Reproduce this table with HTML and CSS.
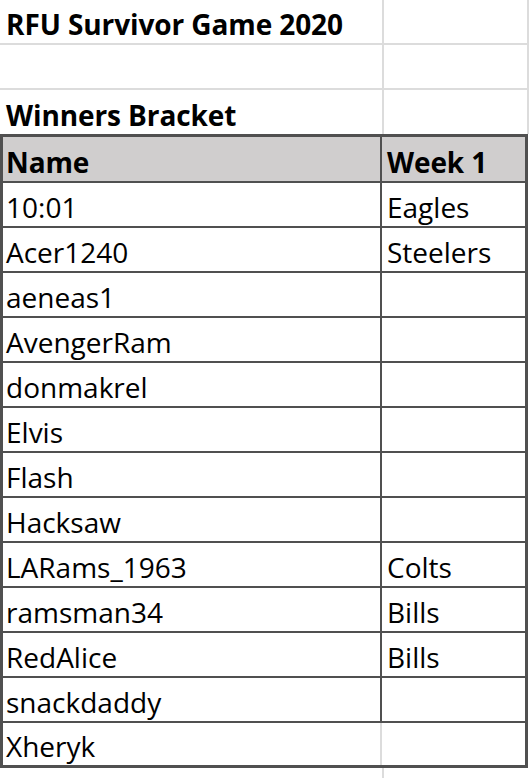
FILE: index.html
```html
<!DOCTYPE html>
<html>
<head>
<meta charset="utf-8">
<link rel="stylesheet" href="styles.css">
</head>
<body>
<div class="sheet">
  <div class="row plain"><div class="cell a bold">RFU Survivor Game 2020</div><div class="cell b"></div></div>
  <div class="row plain"><div class="cell a"></div><div class="cell b"></div></div>
  <div class="row plain"><div class="cell a bold">Winners Bracket</div><div class="cell b"></div></div>
  <div class="table">
    <div class="row head"><div class="cell a bold">Name</div><div class="cell b bold">Week 1</div></div>
    <div class="row data"><div class="cell a">10:01</div><div class="cell b">Eagles</div></div>
    <div class="row data"><div class="cell a">Acer1240</div><div class="cell b">Steelers</div></div>
    <div class="row data"><div class="cell a">aeneas1</div><div class="cell b"></div></div>
    <div class="row data"><div class="cell a">AvengerRam</div><div class="cell b"></div></div>
    <div class="row data"><div class="cell a">donmakrel</div><div class="cell b"></div></div>
    <div class="row data"><div class="cell a">Elvis</div><div class="cell b"></div></div>
    <div class="row data"><div class="cell a">Flash</div><div class="cell b"></div></div>
    <div class="row data"><div class="cell a">Hacksaw</div><div class="cell b"></div></div>
    <div class="row data"><div class="cell a">LARams_1963</div><div class="cell b">Colts</div></div>
    <div class="row data"><div class="cell a">ramsman34</div><div class="cell b">Bills</div></div>
    <div class="row data"><div class="cell a">RedAlice</div><div class="cell b">Bills</div></div>
    <div class="row data"><div class="cell a">snackdaddy</div><div class="cell b"></div></div>
    <div class="row data last"><div class="cell a">Xheryk</div><div class="cell b"></div></div>
  </div>
  <div class="row tail"><div class="cell a"></div><div class="cell b"></div></div>
</div>
</body>
</html>
```

FILE: styles.css
```css
html, body {
  margin: 0;
  padding: 0;
  background: #ffffff;
}
.sheet {
  width: 529px;
  display: flex;
  flex-direction: column;
  font-family: "Open Sans", Lato, sans-serif;
  font-size: 28px;
  color: #000000;
}
.row {
  display: flex;
}
.cell {
  box-sizing: border-box;
  white-space: nowrap;
  overflow: hidden;
  display: flex;
  align-items: flex-end;
  line-height: 1;
}
.bold {
  font-weight: 700;
  letter-spacing: -0.1px;
}
.plain .cell {
  height: 45px;
  border-bottom: 2px solid #dcdcdc;
  padding: 0 0 5px 6px;
}
.plain .a {
  width: 384px;
  border-right: 2px solid #dcdcdc;
}
.plain .b {
  width: 145px;
  border-right: 2px solid #dcdcdc;
}
.plain:nth-child(3) .cell {
  height: 44px;
  border-bottom: none;
}
.table {
  width: 528px;
  box-sizing: border-box;
  border: 3px solid #505050;
  display: flex;
  flex-direction: column;
}
.table .cell {
  height: 45px;
  padding: 0 0 5px 3px;
  border-bottom: 2px solid #505050;
}
.table .a {
  width: 379px;
  border-right: 2px solid #505050;
}
.table .b {
  flex: 1;
  padding-left: 5px;
}
.head .cell {
  background: #d0cece;
  height: 46px;
}
.table .last .cell {
  border-bottom: none;
  height: 42px;
}
.table .last .a {
  border-right-color: #dcdcdc;
}
.tail .cell {
  height: 10px;
}
.tail .a {
  width: 384px;
  border-right: 2px solid #dcdcdc;
}
```
